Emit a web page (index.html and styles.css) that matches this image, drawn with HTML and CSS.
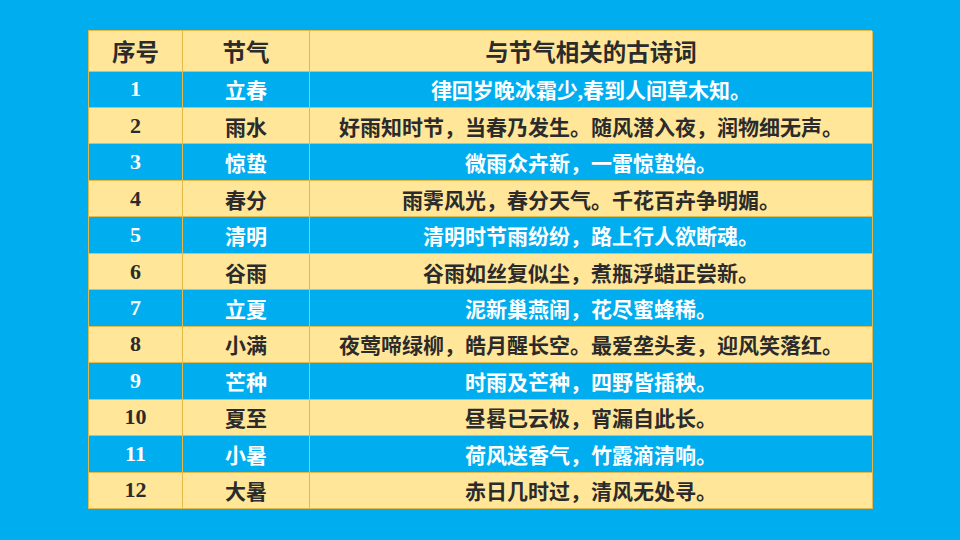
FILE: index.html
```html
<!DOCTYPE html>
<html lang="zh">
<head>
<meta charset="utf-8">
<link rel="stylesheet" href="styles.css">
</head>
<body>
<div class="page">
  <div class="table">
    <div class="cell head">序号</div>
    <div class="cell head">节气</div>
    <div class="cell head wide">与节气相关的古诗词</div>

    <div class="cell blue num">1</div><div class="cell blue">立春</div><div class="cell blue">律回岁晚冰霜少,春到人间草木知。</div>
    <div class="cell yel num">2</div><div class="cell yel">雨水</div><div class="cell yel">好雨知时节，当春乃发生。随风潜入夜，润物细无声。</div>
    <div class="cell blue num">3</div><div class="cell blue">惊蛰</div><div class="cell blue">微雨众卉新，一雷惊蛰始。</div>
    <div class="cell yel num">4</div><div class="cell yel">春分</div><div class="cell yel">雨霁风光，春分天气。千花百卉争明媚。</div>
    <div class="cell blue num">5</div><div class="cell blue">清明</div><div class="cell blue">清明时节雨纷纷，路上行人欲断魂。</div>
    <div class="cell yel num">6</div><div class="cell yel">谷雨</div><div class="cell yel">谷雨如丝复似尘，煮瓶浮蜡正尝新。</div>
    <div class="cell blue num">7</div><div class="cell blue">立夏</div><div class="cell blue">泥新巢燕闹，花尽蜜蜂稀。</div>
    <div class="cell yel num">8</div><div class="cell yel">小满</div><div class="cell yel">夜莺啼绿柳，皓月醒长空。最爱垄头麦，迎风笑落红。</div>
    <div class="cell blue num">9</div><div class="cell blue">芒种</div><div class="cell blue">时雨及芒种，四野皆插秧。</div>
    <div class="cell yel num">10</div><div class="cell yel">夏至</div><div class="cell yel">昼晷已云极，宵漏自此长。</div>
    <div class="cell blue num">11</div><div class="cell blue">小暑</div><div class="cell blue">荷风送香气，竹露滴清响。</div>
    <div class="cell yel num">12</div><div class="cell yel">大暑</div><div class="cell yel">赤日几时过，清风无处寻。</div>
  </div>
</div>
</body>
</html>
```

FILE: styles.css
```css
html, body {
  margin: 0;
  padding: 0;
}
body {
  background: #00aeef;
  width: 960px;
  height: 540px;
  overflow: hidden;
}
.page {
  padding: 30px 0 0 88px;
}
.table {
  display: grid;
  grid-template-columns: 94px 127px 563px;
  grid-template-rows: 40.5px repeat(12, 1fr);
  width: 784px;
  height: 479px;
  box-sizing: border-box;
  border-left: 1px solid #e3b94a;
  border-top: 1px solid #e3b94a;
  font-family: "Liberation Serif", "Noto Sans CJK SC", serif;
  font-weight: bold;
}
.cell {
  display: flex;
  align-items: center;
  justify-content: center;
  border-right: 1px solid #e3b94a;
  border-bottom: 1px solid #e3b94a;
  font-size: 21px;
  white-space: nowrap;
}
.head {
  background: #ffe699;
  color: #2b2b2b;
  font-size: 23.5px;
}
.yel {
  background: #ffe699;
  color: #2b2b2b;
}
.blue {
  background: #00aeef;
  color: #ffffff;
}
.num {
  font-size: 22px;
  font-weight: bold;
}
```
